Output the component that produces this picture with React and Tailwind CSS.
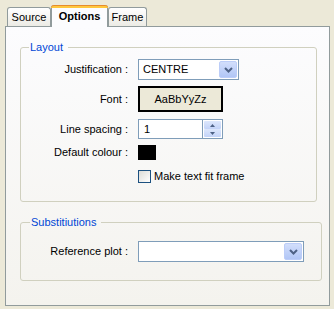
import React from 'react';

function ComboArrow() {
    return (
        <div className="flex h-full w-[18px] items-center justify-center rounded-[2px] border border-[#bccdf8] bg-gradient-to-b from-[#d2defb] to-[#b1c6f6]">
            <svg width="9" height="6" viewBox="0 0 9 6">
                <path d="M1 1 L4.5 4.5 L8 1" fill="none" stroke="#4d6185" strokeWidth="2" />
            </svg>
        </div>
    );
}

function Combo({ width, value }) {
    return (
        <div className={`flex h-[21px] ${width} items-stretch border border-[#7f9db9] bg-white p-px`}>
            <div className="flex flex-1 items-center pl-[3px]">{value}</div>
            <ComboArrow />
        </div>
    );
}

function Row({ label, children, className = '' }) {
    return (
        <div className={`flex items-center ${className}`}>
            <div className="w-[107px] text-right whitespace-nowrap">{label}</div>
            <div className="ml-[10px] flex items-center">{children}</div>
        </div>
    );
}

function Tab({ label, active }) {
    if (active) {
        return (
            <div className="relative z-10 flex h-[22px] w-[57px] flex-col rounded-t-[3px] border-x border-[#919b9c] bg-[#fcfcfe]">
                <div className="-mx-px h-[3px] rounded-t-[3px] border-t border-[#e68b2c] bg-[#ffc73c]" />
                <div className="flex flex-1 items-center justify-center pb-[2px] font-bold">{label}</div>
            </div>
        );
    }
    return (
        <div className="mb-px flex h-[19px] items-center justify-center rounded-t-[3px] border border-b-0 border-[#919b9c] bg-gradient-to-b from-white to-[#ecebe5] px-[5px]">
            {label}
        </div>
    );
}

export default function App() {
    return (
        <div className="h-[309px] w-[334px] bg-[#ece9d8] pt-[5px] font-['Liberation_Sans',sans-serif] text-[11px] leading-[13px] text-black">
            <div className="relative z-10 -mb-px flex h-[22px] items-end pl-[7px]">
                <div className="w-[44px]"><Tab label="Source" /></div>
                <Tab label="Options" active />
                <div className="w-[39px]"><Tab label="Frame" /></div>
            </div>

            <div className="ml-[5px] h-[280px] w-[325px] border border-[#919b9c] bg-gradient-to-b from-[#fcfcfe] to-[#f4f3ee] pl-[14px] pt-[14px]">
                <fieldset className="h-[161px] w-[297px] rounded-[3px] border border-[#d0d0bf]">
                    <legend className="ml-[8px] pl-px pr-[5px] text-[#0046d5]">Layout</legend>

                    <Row label="Justification :" className="mt-[5px]">
                        <Combo width="w-[101px]" value="CENTRE" />
                    </Row>

                    <Row label="Font :" className="mt-[6px]">
                        <div className="flex h-[26px] w-[85px] items-center justify-center border-2 border-black bg-[#ece9d8]">
                            AaBbYyZz
                        </div>
                    </Row>

                    <Row label="Line spacing :" className="mt-[7px]">
                        <div className="flex h-[20px] w-[65px] items-center border border-[#7f9db9] bg-white pl-[5px]">1</div>
                        <div className="flex h-[20px] w-[20px] flex-col border-y border-r border-[#7f9db9] bg-white p-px">
                            <div className="flex flex-1 items-center justify-center rounded-[1px] bg-gradient-to-b from-[#dde7fc] to-[#c3d3f8]">
                                <svg width="5" height="3" viewBox="0 0 5 3"><path d="M0 3 L2.5 0 L5 3 Z" fill="#4d6185" /></svg>
                            </div>
                            <div className="flex flex-1 items-center justify-center rounded-[1px] bg-gradient-to-b from-[#dde7fc] to-[#c3d3f8]">
                                <svg width="5" height="3" viewBox="0 0 5 3"><path d="M0 0 L2.5 3 L5 0 Z" fill="#4d6185" /></svg>
                            </div>
                        </div>
                    </Row>

                    <Row label="Default colour :" className="mt-[6px]">
                        <div className="h-[15px] w-[18px] bg-black" />
                    </Row>

                    <div className="mt-[10px] flex items-center pl-[117px]">
                        <div className="h-[13px] w-[13px] border border-[#1c5180] bg-gradient-to-br from-[#dcdcd7] to-white" />
                        <span className="ml-[3px]">Make text fit frame</span>
                    </div>
                </fieldset>

                <fieldset className="mt-[14px] h-[65px] w-[302px] rounded-[3px] border border-[#d0d0bf]">
                    <legend className="ml-[9px] pl-px pr-[5px] text-[#0046d5]">Substitiutions</legend>
                    <Row label="Reference plot :" className="mt-[12px]">
                        <Combo width="w-[166px]" value="" />
                    </Row>
                </fieldset>
            </div>
        </div>
    );
}
